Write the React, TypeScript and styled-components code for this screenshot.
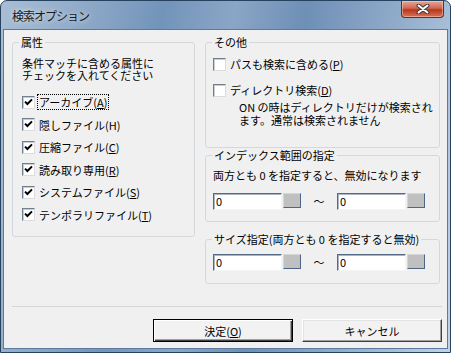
import React from "react";
import styled, { createGlobalStyle } from "styled-components";

const GlobalStyle = createGlobalStyle`
    html, body {
        margin: 0;
        padding: 0;
        background: #ffffff;
    }
    body {
        font-family: "Noto Sans CJK JP", "Noto Sans", sans-serif;
        font-size: 11px;
        color: #000;
    }
`;

type CheckProps = { label: string; mnemonic?: string; suffix?: string; checked?: boolean; focus?: boolean; $h?: number };

const Check = ({ label, mnemonic, suffix = ")", checked, focus, $h }: CheckProps) => (
    <CheckRow $h={$h}>
        <Box>
            {checked && (
                <svg width="9" height="9" viewBox="0 0 9 9">
                    <polyline points="1,3.6 3.4,6 8,1.4" fill="none" stroke="#000" strokeWidth="2" />
                </svg>
            )}
        </Box>
        <LabelText $focus={focus}>
            {label}
            {mnemonic && (
                <>
                    (<u>{mnemonic}</u>
                    {suffix}
                </>
            )}
        </LabelText>
    </CheckRow>
);

const RangeInputs = () => (
    <InputRow>
        <TextBox>0</TextBox>
        <SpinButton />
        <Tilde>～</Tilde>
        <TextBox>0</TextBox>
        <SpinButton />
    </InputRow>
);

const App = () => {
    return (
        <>
            <GlobalStyle />
            <Window>
                <TitleBar>
                    <Title>検索オプション</Title>
                    <CloseButton>
                        <svg width="14" height="10" viewBox="0 0 14 10">
                            <path d="M2.5 1.5 L11.5 8.5 M11.5 1.5 L2.5 8.5" stroke="#3b3b3b" strokeWidth="4" strokeLinecap="round" />
                            <path d="M2.5 1.5 L11.5 8.5 M11.5 1.5 L2.5 8.5" stroke="#ffffff" strokeWidth="2" strokeLinecap="round" />
                        </svg>
                    </CloseButton>
                </TitleBar>
                <Client>
                    <Columns>
                        <Group>
                            <Legend>属性</Legend>
                            <AttrBody>
                                <Description>
                                    <div>条件マッチに含める属性に</div>
                                    <div>チェックを入れてください</div>
                                </Description>
                                <Check label="アーカイブ" mnemonic="A" checked focus $h={22.5} />
                                <Check label="隠しファイル(H)" checked $h={22.5} />
                                <Check label="圧縮ファイル" mnemonic="C" checked $h={22.5} />
                                <Check label="読み取り専用" mnemonic="R" checked $h={22.5} />
                                <Check label="システムファイル" mnemonic="S" checked $h={22.5} />
                                <Check label="テンポラリファイル" mnemonic="T" checked $h={22.5} />
                            </AttrBody>
                        </Group>
                        <RightColumn>
                            <Group>
                                <Legend>その他</Legend>
                                <OtherBody>
                                    <Check label="パスも検索に含める" mnemonic="P" />
                                    <Check label="ディレクトリ検索" mnemonic="D" />
                                    <Note>
                                        <div>ON の時はディレクトリだけが検索され</div>
                                        <div>ます。通常は検索されません</div>
                                    </Note>
                                </OtherBody>
                            </Group>
                            <Group>
                                <Legend>インデックス範囲の指定</Legend>
                                <RangeBody $top={6}>
                                    <Hint>両方とも 0 を指定すると、無効になります</Hint>
                                    <RangeInputs />
                                </RangeBody>
                            </Group>
                            <Group $gap={10}>
                                <Legend>サイズ指定(両方とも 0 を指定すると無効)</Legend>
                                <RangeBody $top={8} $bottom={12}>
                                    <RangeInputs />
                                </RangeBody>
                            </Group>
                        </RightColumn>
                    </Columns>
                    <Footer>
                        <Button $default>
                            決定(<u>O</u>)
                        </Button>
                        <Button>キャンセル</Button>
                    </Footer>
                </Client>
            </Window>
        </>
    );
};

export default App;

const Window = styled.div`
    width: 451px;
    height: 353px;
    box-sizing: border-box;
    display: flex;
    flex-direction: column;
    overflow: hidden;
    border: 1px solid #27425f;
    border-radius: 7px 7px 0 0;
    background: linear-gradient(
        100deg,
        #a9bed5 0%,
        #93adca 14%,
        #7294ba 32%,
        #8aa6c6 46%,
        #6e8fb6 60%,
        #90abca 78%,
        #c2d3e5 100%
    );
`;

const TitleBar = styled.div`
    height: 28px;
    flex: none;
    display: flex;
    align-items: flex-start;
    justify-content: space-between;
    padding-left: 11px;
`;

const Title = styled.span`
    margin-top: 8px;
    font-size: 12px;
    line-height: 14px;
    letter-spacing: -1px;
    color: #1a1a1a;
    text-shadow: 0 0 5px rgba(255, 255, 255, 0.8);
`;

const CloseButton = styled.div`
    width: 43px;
    height: 17px;
    margin-right: 6px;
    box-sizing: border-box;
    display: flex;
    align-items: center;
    justify-content: center;
    border: 1px solid #6b2b1f;
    border-top: none;
    border-radius: 0 0 4px 4px;
    background: linear-gradient(180deg, #e6a897 0%, #d0674f 45%, #b8361c 55%, #d9735a 100%);
    box-shadow: inset 0 0 0 1px rgba(255, 220, 210, 0.45);
`;

const Client = styled.div`
    flex: 1;
    margin: 0 2px 3px 2px;
    border: 1px solid #5a7aa1;
    background: #f0f0f0;
    padding: 5px 7px 0 8px;
    display: flex;
    flex-direction: column;
`;

const Columns = styled.div`
    display: grid;
    grid-template-columns: 183px 235px;
    column-gap: 10px;
    align-items: start;
`;

const RightColumn = styled.div`
    display: flex;
    flex-direction: column;
`;

const Group = styled.fieldset<{ $gap?: number }>`
    margin: ${(p) => p.$gap ?? 0}px 0 0 0;
    padding: 0;
    min-width: 0;
    border: 1px solid #d3d8dc;
    border-radius: 3px;
`;

const Legend = styled.legend`
    margin-left: 6px;
    padding: 0 2px;
    line-height: 14px;
    font-size: 11px;
`;

const AttrBody = styled.div`
    padding: 8px 0 10px 9px;
`;

const Description = styled.div`
    line-height: 12px;
    margin-bottom: 10px;
`;

const CheckRow = styled.label<{ $h?: number }>`
    display: flex;
    align-items: center;
    gap: 2px;
    height: ${(p) => p.$h ?? 22}px;
`;

const Box = styled.span`
    width: 13px;
    height: 13px;
    flex: none;
    box-sizing: border-box;
    display: flex;
    align-items: center;
    justify-content: center;
    border: 1px solid;
    border-color: #707f90 #dcdcdc #dcdcdc #707f90;
    background: #ffffff;
    box-shadow: inset 1px 1px 0 #c9ced4;
`;

const LabelText = styled.span<{ $focus?: boolean }>`
    padding: 0 1px;
    line-height: 14px;
    white-space: nowrap;
    border: 1px dotted ${(p) => (p.$focus ? "#000" : "transparent")};
`;

const OtherBody = styled.div`
    display: flex;
    flex-direction: column;
    gap: 4px;
    padding: 4px 0 20px 7px;
`;

const Note = styled.div`
    margin: -4px 0 0 26px;
    line-height: 13px;
`;

const RangeBody = styled.div<{ $top: number; $bottom?: number }>`
    padding: ${(p) => p.$top}px 0 ${(p) => p.$bottom ?? 11}px 7px;
`;

const Hint = styled.div`
    line-height: 14px;
    margin-bottom: 11px;
    white-space: nowrap;
`;

const InputRow = styled.div`
    display: flex;
    align-items: flex-start;
    height: 17px;
`;

const TextBox = styled.div`
    width: 69px;
    height: 17px;
    box-sizing: border-box;
    padding-left: 2px;
    line-height: 14px;
    background: #ffffff;
    border: 1px solid;
    border-color: #566a84 #f4f4f4 #f4f4f4 #566a84;
    box-shadow: inset 1px 1px 0 #a9b5c4;
`;

const SpinButton = styled.div`
    width: 18px;
    height: 15px;
    margin-left: 1px;
    box-sizing: border-box;
    background: #c0c0c0;
    border: 1px solid;
    border-color: #d6d6d6 #4d6686 #4d6686 #d6d6d6;
`;

const Tilde = styled.span`
    width: 36px;
    text-align: center;
    line-height: 16px;
`;

const Footer = styled.div`
    margin: 22px -2px 0 0;
    padding-top: 12px;
    border-top: 1px solid #d5d5d5;
    display: flex;
    justify-content: flex-end;
    gap: 9px;
`;

const Button = styled.button<{ $default?: boolean }>`
    width: 140px;
    height: 23px;
    box-sizing: border-box;
    padding: 0;
    font-family: inherit;
    font-size: 11px;
    color: #000;
    background: #f2f2f2;
    border: 1px solid;
    border-color: ${(p) => (p.$default ? "#000" : "#ffffff #404040 #404040 #ffffff")};
    box-shadow: ${(p) =>
        p.$default
            ? "inset 1px 1px 0 #ffffff, inset -1px -1px 0 #404040, inset -2px -2px 0 #a0a0a0"
            : "inset -1px -1px 0 #a0a0a0, inset 1px 1px 0 #e3e3e3"};
`;
